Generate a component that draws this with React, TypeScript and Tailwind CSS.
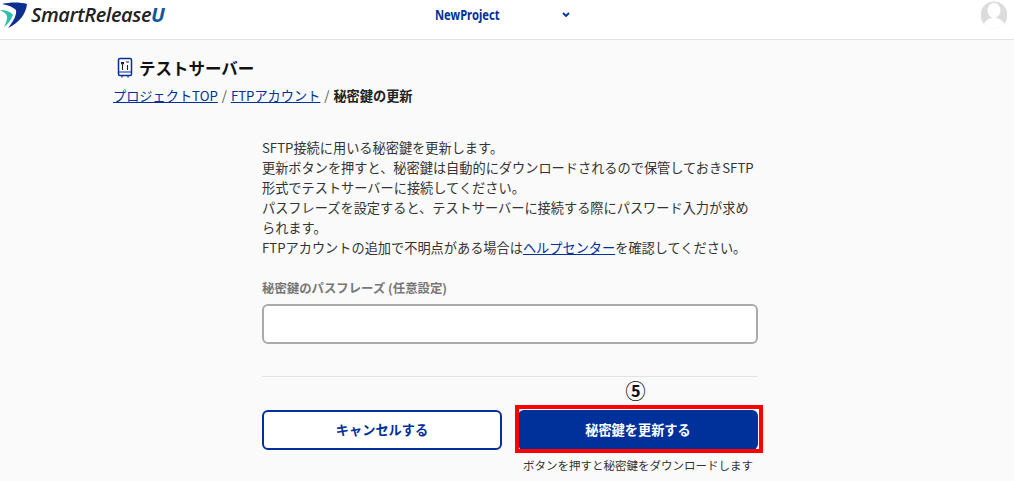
import React from "react";

const jp = "font-['Noto_Sans_CJK_JP','Noto_Sans',sans-serif]";

function Logo() {
  return (
    <div className="flex items-center h-full">
      <svg width="28" height="28" viewBox="0 0 28 28" className="shrink-0">
        <path d="M2 3 C10 1 20 1 27 3 C26 13 19 22 8 27 C13 21 17 14 16 9 C13 6 8 4 2 3 Z" fill="#0f2f8f" />
        <path d="M0 9 C6 9 11 11 13 14 C11 19 8 23 4 26 C7 20 8 16 6 13 C4 11 2 10 0 9 Z" fill="#29c0ac" />
      </svg>
      <span className="ml-[3px] text-[20px] leading-none italic font-semibold tracking-[-0.4px] text-[#222] font-['Open_Sans',sans-serif] whitespace-nowrap">
        SmartRelease<span className="text-[#12579c] font-bold">U</span>
      </span>
    </div>
  );
}

function Header() {
  return (
    <header className="h-[40px] bg-white border-b border-[#e2e2e2] flex items-start relative">
      <div className="w-[166px] h-[28px] mt-[1px]">
        <Logo />
      </div>
      <div className="ml-[269px] mt-[6px] w-[135px] flex items-center justify-between">
        <span className="text-[14px] leading-[18px] font-bold text-[#00309a] font-['Noto_Sans',sans-serif] scale-x-[0.8] origin-left">NewProject</span>
        <svg width="8" height="6" viewBox="0 0 8 6" className="-mt-[1px]">
          <path d="M1 1 L4 4 L7 1" fill="none" stroke="#00309a" strokeWidth="1.8" />
        </svg>
      </div>
      <div className="ml-auto mr-[7px] -mt-[1px] w-[26px] h-[31px]">
        <svg width="26" height="31" viewBox="0 0 26 31">
          <circle cx="13" cy="16" r="13.5" fill="#dcdcdc" />
          <ellipse cx="13" cy="11.5" rx="6.5" ry="7.5" fill="#fff" />
          <path d="M3 25 C5 20 9 19 13 19 C17 19 21 20 23 25 C20 28.5 17 29.5 13 29.5 C9 29.5 6 28.5 3 25 Z" fill="#fff" />
        </svg>
      </div>
    </header>
  );
}

export default function App() {
  return (
    <div className={`w-[1014px] h-[481px] overflow-hidden bg-[#fafafa] text-[#222] ${jp}`}>
      <Header />
      <main className="pl-[113px]">
        <div className="flex items-center h-[24px] mt-[16px]">
          <svg width="20" height="22" viewBox="0 0 20 22" className="ml-[2px]">
            <rect x="3.5" y="1.5" width="13" height="17" rx="1.5" fill="none" stroke="#00309a" strokeWidth="1.5" />
            <path d="M3.5 15 H16.5 M7 19 V20.5 M13 19 V20.5" stroke="#00309a" strokeWidth="1.2" />
            <path d="M7.5 5 V13 M12.5 8 V13 M6.5 5 V6.5 Q7.5 8 8.5 6.5 V5 M11 5 H14" stroke="#222" strokeWidth="1.1" fill="none" />
          </svg>
          <h1 className="ml-[4px] text-[16.5px] leading-[24px] font-bold text-[#111]">テストサーバー</h1>
        </div>
        <nav className="text-[13.2px] leading-[20px] mt-[6px] text-[#555] whitespace-nowrap">
          <a className="text-[#00309a] underline">プロジェクトTOP</a>
          <span className="mx-[1px]"> / </span>
          <a className="text-[#00309a] underline">FTPアカウント</a>
          <span className="mx-[1px]"> / </span>
          <span className="font-bold text-[#222]">秘密鍵の更新</span>
        </nav>
        <section className="ml-[149px] w-[496px] mt-[32px]">
          <p className="text-[13.2px] leading-[20px] text-[#333]">
            SFTP接続に用いる秘密鍵を更新します。<br />
            更新ボタンを押すと、秘密鍵は自動的にダウンロードされるので保管しておきSFTP形式でテストサーバーに接続してください。<br />
            パスフレーズを設定すると、テストサーバーに接続する際にパスワード入力が求められます。<br />
            FTPアカウントの追加で不明点がある場合は<a className="text-[#00309a] underline">ヘルプセンター</a>を確認してください。
          </p>
          <label className="block mt-[22px] text-[12.4px] leading-[16px] font-semibold text-[#777]">秘密鍵のパスフレーズ (任意設定)</label>
          <input className="block mt-[8px] w-full h-[40px] bg-white border-2 border-[#aaa] rounded-[6px]" />
          <div className="mt-[32px] border-t border-[#e2e2e2]" />
          <div className="flex justify-between mt-[5px]">
            <div className="w-[240px] pt-[28px]">
              <button className="w-full h-[40px] bg-white border-2 border-[#00309a] rounded-[6px] text-[13.2px] font-bold text-[#00309a]">キャンセルする</button>
            </div>
            <div className="w-[240px] flex flex-col items-center relative">
              <div className="h-[18px] text-[20px] leading-[18px] text-[#111] font-bold -ml-[5px]">⑤</div>
              <div className="h-[10px]" />
              <button className="w-full h-[40px] bg-[#00309a] rounded-[6px] text-[13.2px] font-bold text-white">秘密鍵を更新する</button>
              <div className="absolute left-[-3px] right-[-5px] top-[23px] h-[48px] border-[4px] border-[#f00] pointer-events-none" />
              <p className="mt-[7px] text-[11.5px] leading-[16px] text-[#333] whitespace-nowrap">ボタンを押すと秘密鍵をダウンロードします</p>
            </div>
          </div>
        </section>
      </main>
    </div>
  );
}
